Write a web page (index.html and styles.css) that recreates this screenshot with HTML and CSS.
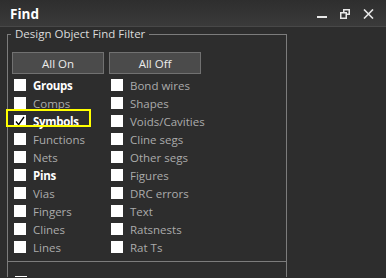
FILE: index.html
```html
<!DOCTYPE html>
<html lang="en">
<head>
    <meta charset="UTF-8">
    <title>Find</title>
    <link rel="stylesheet" href="styles.css">
</head>
<body>
    <div class="window">
        <div class="titlebar">
            <span class="title">Find</span>
            <div class="controls">
                <svg width="10" height="10" viewBox="0 0 10 10"><rect x="0" y="7" width="10" height="2" fill="#e8e8e8"/></svg>
                <svg width="10" height="10" viewBox="0 0 10 10" fill="none" stroke="#e8e8e8" stroke-width="1.5">
                    <rect x="3.75" y="0.75" width="5.5" height="4.5"/>
                    <rect x="0.75" y="3.75" width="5.5" height="5.5" fill="#363636"/>
                </svg>
                <svg width="11" height="10" viewBox="0 0 11 10" stroke="#e8e8e8" stroke-width="1.6"><path d="M1 0.5 L10 9.5 M10 0.5 L1 9.5"/></svg>
            </div>
        </div>

        <fieldset class="group">
            <legend>Design Object Find Filter</legend>
            <div class="columns">
                <div class="column">
                    <button class="btn">All On</button>
                    <label class="row strong"><span class="box"></span>Groups</label>
                    <label class="row"><span class="box"></span>Comps</label>
                    <label class="row strong marked"><span class="box"><svg width="10" height="10" viewBox="0 0 10 10" fill="none" stroke="#000" stroke-width="1.3"><path d="M1 5.5 L3.6 8.6 L9 1"/></svg></span>Symbols</label>
                    <label class="row"><span class="box"></span>Functions</label>
                    <label class="row"><span class="box"></span>Nets</label>
                    <label class="row strong"><span class="box"></span>Pins</label>
                    <label class="row"><span class="box"></span>Vias</label>
                    <label class="row"><span class="box"></span>Fingers</label>
                    <label class="row"><span class="box"></span>Clines</label>
                    <label class="row"><span class="box"></span>Lines</label>
                </div>
                <div class="column">
                    <button class="btn">All Off</button>
                    <label class="row"><span class="box"></span>Bond wires</label>
                    <label class="row"><span class="box"></span>Shapes</label>
                    <label class="row"><span class="box"></span>Voids/Cavities</label>
                    <label class="row"><span class="box"></span>Cline segs</label>
                    <label class="row"><span class="box"></span>Other segs</label>
                    <label class="row"><span class="box"></span>Figures</label>
                    <label class="row"><span class="box"></span>DRC errors</label>
                    <label class="row"><span class="box"></span>Text</label>
                    <label class="row"><span class="box"></span>Ratsnests</label>
                    <label class="row"><span class="box"></span>Rat Ts</label>
                </div>
            </div>
        </fieldset>

        <div class="group-next">
            <span class="box"></span>
        </div>
    </div>
</body>
</html>
```

FILE: styles.css
```css
:root {
    --bg: #2d2d2d;
    --title-top: #2e2e2e;
    --title-bottom: #3a3a3a;
    --frame: #7c7c7c;
    --text-dim: #ababab;
    --text-bright: #ffffff;
    --btn-bg: #4b4b4b;
    --btn-border: #717171;
    --mark: #ffff00;
}

html, body {
    margin: 0;
    height: 100%;
    overflow: hidden;
}

body {
    background-color: var(--bg);
    font-family: 'Open Sans', 'Noto Sans', sans-serif;
    color: var(--text-dim);
}

.titlebar {
    height: 26px;
    display: flex;
    align-items: center;
    justify-content: space-between;
    padding: 0 12px 0 10px;
    background: linear-gradient(var(--title-top), var(--title-bottom));
    border-bottom: 1px solid #484848;
}

.title {
    color: #fff;
    font-weight: bold;
    font-size: 13.5px;
    margin-top: 1px;
}

.controls {
    display: flex;
    gap: 13px;
    align-items: center;
    margin-top: 1px;
}

.controls svg {
    display: block;
}

.group {
    margin: 0 99px 0 7px;
    padding: 11px 4px 5px 4px;
    border: 1px solid var(--frame);
    min-width: 0;
}

legend {
    padding: 0 4px;
    margin-left: -1px;
    font-size: 11.5px;
    line-height: 14px;
    color: #dcdcdc;
}

.columns {
    display: flex;
    gap: 5px;
}

.column {
    display: flex;
    flex-direction: column;
    width: 92px;
}

.btn {
    height: 22px;
    width: 92px;
    margin-bottom: 2px;
    padding: 0;
    background-color: var(--btn-bg);
    border: 1px solid var(--btn-border);
    color: #ececec;
    font-family: inherit;
    font-size: 11.5px;
}

.row {
    height: 18px;
    display: flex;
    align-items: center;
    gap: 7px;
    padding-left: 2px;
    font-size: 11.5px;
    white-space: nowrap;
    position: relative;
}

.box {
    width: 12px;
    height: 12px;
    background-color: #fff;
    display: flex;
    align-items: center;
    justify-content: center;
    flex: none;
}

.strong {
    color: var(--text-bright);
    font-weight: bold;
    letter-spacing: -0.3px;
}

.marked::after {
    content: "";
    position: absolute;
    left: -6px;
    top: -3px;
    width: 81px;
    height: 14px;
    border: 2px solid var(--mark);
}

.group-next {
    margin: 0 99px 0 7px;
    height: 15px;
    overflow: hidden;
    border-left: 1px solid var(--frame);
    border-right: 1px solid var(--frame);
    padding: 14px 0 0 7px;
    box-sizing: border-box;
}
```
